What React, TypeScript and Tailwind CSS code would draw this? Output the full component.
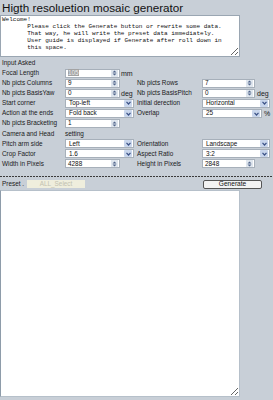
import React from 'react';

const label = 'text-[6.4px] leading-none text-[#1a1a1a] whitespace-nowrap';

const Spinner = () => (
  <div className="w-[7px] h-[7px] mr-[1px] flex items-center justify-center bg-[#dfe6ee]">
    <svg width="5" height="6" viewBox="0 0 5 6">
      <path d="M2.5 0.5 L4.5 2.5 L0.5 2.5 Z" fill="#51648a" />
      <path d="M0.5 3.5 L4.5 3.5 L2.5 5.5 Z" fill="#51648a" />
    </svg>
  </div>
);

const Chevron = () => (
  <div className="w-[8px] h-[7px] mr-[1px] flex items-center justify-center bg-[#c9d6ec] rounded-[1px]">
    <svg width="5" height="4" viewBox="0 0 5 4">
      <polyline points="0.5,0.8 2.5,3 4.5,0.8" fill="none" stroke="#3b5287" strokeWidth="1.2" />
    </svg>
  </div>
);

function NumBox({ value, w, selected }: { value: string; w: string; selected?: boolean }) {
  return (
    <div className={`flex items-center h-[9px] bg-white border border-[#a7b0ba] ${w}`}>
      <span className="flex-1 pl-[2px] text-[6.4px] leading-none text-[#111]">
        {selected ? <span className="bg-[#a3a3a3] text-[#eeeeee]">{value}</span> : value}
      </span>
      <Spinner />
    </div>
  );
}

function SelectBox({ value, w }: { value: string; w: string }) {
  return (
    <div className={`flex items-center h-[9px] bg-white border border-[#a7b0ba] ${w}`}>
      <span className="flex-1 pl-[3px] text-[6.4px] leading-none text-[#111]">{value}</span>
      <Chevron />
    </div>
  );
}

function Row({ a, b, c, d }: { a: React.ReactNode; b?: React.ReactNode; c?: React.ReactNode; d?: React.ReactNode }) {
  return (
    <div className="flex items-center h-[10.1px]">
      <div className={`w-[65px] pl-[2px] ${label}`}>{a}</div>
      <div className="w-[72px] flex items-center gap-[1px]">{b}</div>
      <div className={`w-[65px] ${label}`}>{c}</div>
      <div className="flex-1 flex items-center gap-[2px]">{d}</div>
    </div>
  );
}

const Unit = ({ t }: { t: string }) => <span className={`${label} text-[7px]`}>{t}</span>;

const intro = `Welcome!
       Please click the Generate button or rewrite some data.
       That way, he will write the preset data immediately.
       User guide is displayed if Generate after roll down in
       this space.`;

export default function App() {
  return (
    <div className="w-[273px] h-[400px] bg-[#c8cfd7] font-['Liberation_Sans',Arial,sans-serif] overflow-hidden">
      <h1 className="text-[11.7px] leading-[15px] pl-[2px] text-[#111] whitespace-nowrap">
        Higth resoluetion mosaic generator
      </h1>
      <textarea
        readOnly
        value={intro}
        className="block w-[240px] h-[42px] bg-white border border-[#9aa6b2] p-0 pl-[1px] font-['Liberation_Mono','DejaVu_Sans_Mono',monospace] text-[6px] leading-[7.1px] text-[#111] outline-none"
      />
      <div className="mt-[1px]">
        <div className="flex items-center h-[10.1px] pl-[2px]">
          <span className={label}>Input Asked</span>
        </div>
        <Row a="Focal Length" b={<><NumBox value="105" w="w-[55px]" selected /><Unit t="mm" /></>} />
        <Row
          a="Nb picts Columns"
          b={<NumBox value="9" w="w-[55px]" />}
          c="Nb picts Rows"
          d={<NumBox value="7" w="w-[53px]" />}
        />
        <Row
          a="Nb picts BasisYaw"
          b={<><NumBox value="0" w="w-[55px]" /><Unit t="deg" /></>}
          c="Nb picts BasisPitch"
          d={<><NumBox value="0" w="w-[53px]" /><Unit t="deg" /></>}
        />
        <Row
          a="Start corner"
          b={<SelectBox value="Top-left" w="w-[69px]" />}
          c="Initial derection"
          d={<SelectBox value="Horizontal" w="w-[68px]" />}
        />
        <Row
          a="Action at the ends"
          b={<SelectBox value="Fold back" w="w-[69px]" />}
          c="Overlap"
          d={<><SelectBox value="25" w="w-[60px]" /><Unit t="%" /></>}
        />
        <Row a="Nb picts Bracketing" b={<NumBox value="1" w="w-[55px]" />} />
        <Row a="Camera and Head" b={<span className={label}>setting</span>} />
        <Row
          a="Pitch arm side"
          b={<SelectBox value="Left" w="w-[69px]" />}
          c="Orientation"
          d={<SelectBox value="Landscape" w="w-[68px]" />}
        />
        <Row
          a="Crop Factor"
          b={<SelectBox value="1.6" w="w-[69px]" />}
          c="Aspect Ratio"
          d={<SelectBox value="3:2" w="w-[68px]" />}
        />
        <Row
          a="Width in Pixels"
          b={<NumBox value="4288" w="w-[55px]" />}
          c="Height in Pixels"
          d={<NumBox value="2848" w="w-[53px]" />}
        />
      </div>
      <div className="mt-[7px] h-px w-full bg-[repeating-linear-gradient(90deg,#3a3a3a_0_2px,transparent_2px_3px)]" />
      <div className="flex items-center h-[12px] mt-[1px]">
        <span className={`pl-[2px] w-[27px] ${label}`}>Preset .</span>
        <button
          disabled
          className="w-[58px] h-[8px] bg-[#efeedd] text-[#c2c1b0] text-[6.4px] leading-none flex items-center justify-center"
        >
          ALL_Select
        </button>
        <div className="flex-1" />
        <button className="mr-[11px] w-[59px] h-[9px] bg-[#f3f3f3] border border-[#555] rounded-[2px] text-[6.6px] leading-none text-[#111] flex items-center justify-center">
          Generate
        </button>
      </div>
      <textarea
        readOnly
        value=""
        className="block w-[240px] h-[207px] bg-white border border-[#b6c0ca] border-l-[#8e9caa] p-0 outline-none"
      />
    </div>
  );
}
